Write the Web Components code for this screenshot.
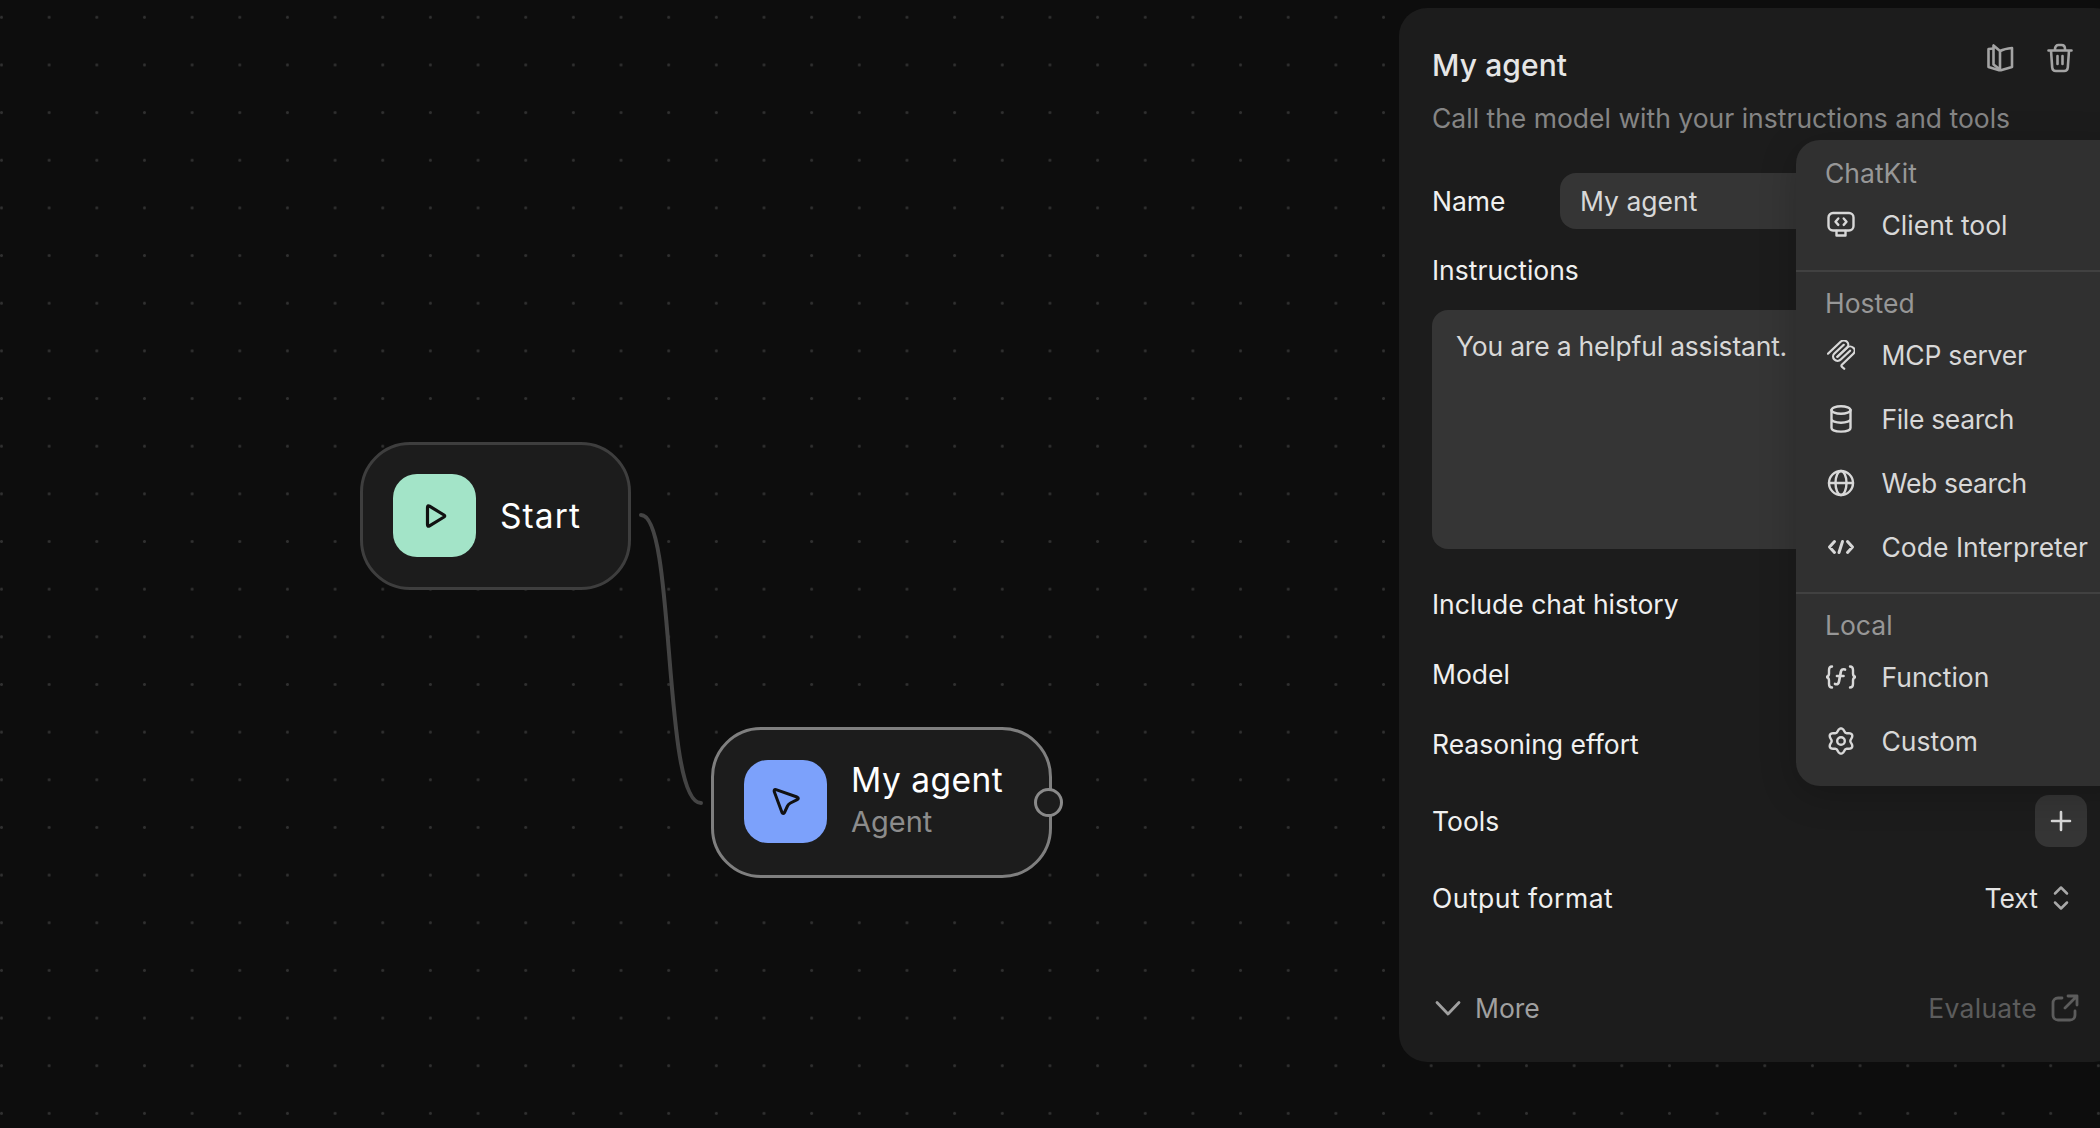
<!DOCTYPE html>
<html>
<head>
<meta charset="utf-8">
<title>My agent</title>
<style>
  html, body { margin: 0; height: 100%; background: #0d0d0d; overflow: hidden; }
  body { font-family: Inter, "Liberation Sans", sans-serif; color: #e8e8e8; }
</style>
</head>
<body>
<flow-canvas>
  <flow-node style="left:360px;top:442px;width:271px;height:148px" icon="play" color="#a3e4c8" title="Start" track="1.100"></flow-node>
  <flow-node style="left:711px;top:727px;width:341px;height:151px" icon="cursor" color="#7ca1fb" title="My agent" sub="Agent" track="0.5" selected></flow-node>
</flow-canvas>

<agent-panel>
  <panel-row label="Name" style="margin-top:35px;height:56px">
    <div style="margin-left:auto;width:527px;height:56px;box-sizing:border-box;padding:0 20px;background:#353535;border-radius:16px;display:flex;align-items:center;font-size:26.5px;color:#d8d8d8">My agent</div>
  </panel-row>
  <panel-row label="Instructions" style="margin-top:21px;height:40px"></panel-row>
  <div style="margin-top:20px;height:239px;box-sizing:border-box;padding:18px 24px;background:#353535;border-radius:16px;font-size:26.5px;line-height:36px;letter-spacing:-0.2px;color:#d8d8d8">You are a helpful assistant.</div>
  <panel-row label="Include chat history" style="margin-top:20px;height:70px"></panel-row>
  <panel-row label="Model" style="height:70px"></panel-row>
  <panel-row label="Reasoning effort" style="height:70px"></panel-row>
  <panel-row label="Tools" style="margin-top:16px;height:52px">
    <div style="margin-left:auto;width:52px;height:52px;background:#353535;border-radius:14px;display:flex;align-items:center;justify-content:center">
      <svg width="24" height="24" viewBox="0 0 24 24" fill="none" stroke="#d8d8d8" stroke-width="2.6" stroke-linecap="round"><path d="M12 3v18M3 12h18"/></svg>
    </div>
  </panel-row>
  <panel-row label="Output format" track="0.5" style="margin-top:25px;height:52px">
    <div style="margin-left:auto;margin-right:18px;display:flex;align-items:center;gap:15px;font-size:26.5px;color:#e4e4e4">Text
      <svg width="16" height="28" viewBox="0 0 16 28" fill="none" stroke="#a8a8a8" stroke-width="2.5" stroke-linecap="round" stroke-linejoin="round"><path d="M2 9.5 8 3.5l6 6M2 18.500l6 6 6-6"/></svg>
    </div>
  </panel-row>
  <panel-footer style="margin-top:60px"></panel-footer>
</agent-panel>

<tool-menu>
  <menu-label>ChatKit</menu-label>
  <menu-item icon="client">Client tool</menu-item>
  <menu-sep></menu-sep>
  <menu-label>Hosted</menu-label>
  <menu-item icon="mcp" style="letter-spacing:-0.2px">MCP server</menu-item>
  <menu-item icon="file" style="letter-spacing:-0.35px">File search</menu-item>
  <menu-item icon="web" style="letter-spacing:-0.35px">Web search</menu-item>
  <menu-item icon="code">Code Interpreter</menu-item>
  <menu-sep></menu-sep>
  <menu-label>Local</menu-label>
  <menu-item icon="fn">Function</menu-item>
  <menu-item icon="gear">Custom</menu-item>
</tool-menu>

<script>
// six soft lobes, sampled round the circle
function gearPath() {
  let d = '';
  for (let i = 0; i < 72; i++) {
    const a = i / 72 * Math.PI * 2;
    const r = 11 + 1.7 * Math.cos(6 * a);
    const x = 14 + r * Math.sin(a);
    const y = 14 - r * Math.cos(a);
    d += (i ? 'L' : 'M') + x.toFixed(2) + ' ' + y.toFixed(2);
  }
  return d + 'z';
}

const ICONS = {
  play: '<svg width="28" height="32" viewBox="0 0 28 32" fill="none" stroke="#111" stroke-width="3.2" stroke-linejoin="round"><path d="M6.500 7.500Q6.500 5 8.500 6.200L23 15Q24.500 16 23 17L8.500 25.800Q6.500 27 6.500 24.500z"/></svg>',
  cursor: '<svg width="32" height="32" viewBox="0 0 32 32" fill="none" stroke="#111" stroke-width="3" stroke-linejoin="round"><path d="M6 3.700 27 11Q29.500 12.200 27.200 13.600L20.500 17Q18.500 18 17.500 20L14.500 26.500Q13 28.500 12 26.500L4.200 5.500Q3.800 3 6 3.700z"/></svg>',
  client: '<svg viewBox="0 0 28 28"><rect x="1.500" y="2" width="25" height="17.500" rx="4.500"/><path d="M9.500 20v4.500h9V20M11.300 7.500 8.500 10.700l2.800 3.200M16.700 7.500l2.800 3.200-2.800 3.200"/></svg>',
  mcp: '<svg viewBox="20 20 150 170" preserveAspectRatio="none"><g stroke-width="12"><path d="M25 97.850 92.880 29.970c9.370-9.370 24.570-9.370 33.940 0s9.370 24.570 0 33.940L75.560 115.180"/><path d="M76.270 114.470 126.820 63.910c9.370-9.370 24.570-9.370 33.940 0l.35.350c9.370 9.370 9.370 24.570 0 33.940L99.720 159.600c-3.120 3.120-3.120 8.190 0 11.310L112.330 183.520"/><path d="M109.850 46.940 59.650 97.150c-9.370 9.370-9.370 24.570 0 33.940s24.570 9.370 33.940 0l50.200-50.210"/></g></svg>',
  file: '<svg viewBox="0 0 28 28"><ellipse cx="14" cy="5" rx="9.500" ry="3.800"/><path d="M4.500 5v18c0 2.200 4.200 3.600 9.500 3.600s9.500-1.400 9.500-3.600V5M4.500 14c0 2.200 4.200 3.800 9.500 3.800s9.500-1.600 9.500-3.800"/></svg>',
  web: '<svg viewBox="0 0 28 28"><circle cx="14" cy="14" r="12"/><ellipse cx="14" cy="14" rx="5.500" ry="12"/><path d="M2 14h24"/></svg>',
  code: '<svg viewBox="0 0 28 28"><g stroke-width="3"><path d="M7.500 8.500 2.500 14l5 5.500M20.500 8.500l5 5.500-5 5.500M15.500 8.500 12 19.500"/></g></svg>',
  fn: '<svg viewBox="1 0 30 28" style="width:30px"><path d="M7 3.500C4.500 3.500 4 5 4 7v3.500c0 2-.8 3-2.500 3.500C3.200 14.500 4 15.500 4 17.500V21c0 2 .5 3.500 3 3.500M25 3.500c2.500 0 3 1.500 3 3.500v3.500c0 2 .8 3 2.500 3.500-1.700.5-2.500 1.500-2.500 3.500V21c0 2-.5 3.500-3 3.500"/><path stroke-width="2.700" d="M20 6.500c-2.500-.8-3.800.3-4.200 2.500l-1.800 9.500c-.4 2.200-1.600 3.300-4 2.500M12 13h6.500"/></svg>',
  gear: '<svg viewBox="0 0 28 28"><path d="' + gearPath() + '"/><circle cx="14" cy="14" r="3.800"/></svg>',
  book: '<svg width="28" height="30" viewBox="0 0 28 30" fill="none" stroke="#a4a4a4" stroke-width="2.6" stroke-linejoin="round"><path d="M13 8 6.500 2.500v19l6.500 5z"/><path d="M13 8c3-1.500 7-2.500 12-3v19l-12 3.500"/><path d="M6.500 5.500l-5 .5v18l11.500 3.500"/></svg>',
  trash: '<svg width="26" height="30" viewBox="0 0 26 30" fill="none" stroke="#a4a4a4" stroke-width="2.600" stroke-linecap="round" stroke-linejoin="round"><path d="M1.500 7.500h23M8 7.500V6c0-2.500 1.500-4 3.500-4h3C16.500 2 18 3.500 18 6v1.500M4 7.500l1.200 17c.2 2.300 1.500 3.500 3.600 3.500h8.400c2.100 0 3.400-1.200 3.600-3.500L22 7.500M10.500 13v8M15.500 13v8"/></svg>',
  down: '<svg width="28" height="16" viewBox="0 0 28 16" fill="none" stroke="#a0a0a0" stroke-width="2.800" stroke-linecap="round" stroke-linejoin="round"><path d="M3 2.500 14 14 25 2.500"/></svg>',
  open: '<svg width="28" height="28" viewBox="0 0 28 28" fill="none" stroke="#5c5c5c" stroke-width="2.800" stroke-linecap="round" stroke-linejoin="round"><path d="M11 4H7C4 4 2 6 2 9v12c0 3 2 5 5 5h12c3 0 5-2 5-5v-4M17 2h9v9M26 2 14 14"/></svg>'
};

class FlowCanvas extends HTMLElement {
  connectedCallback() {
    this.attachShadow({ mode: 'open' });
    this.shadowRoot.innerHTML = `
      <style>
        :host {
          position: absolute; inset: 0; display: block; overflow: hidden;
          background-color: #0d0d0d;
          background-image: radial-gradient(circle at 1.500px 1.500px, #303030 1.200px, transparent 1.700px);
          background-size: 47.66px 47.66px;
          background-position: 0px 15.800px;
        }
        svg { position: absolute; left: 0; top: 0; }
      </style>
      <svg width="1400" height="1128" fill="none">
        <path d="M641 515C676 515 662 803 701 803" stroke="#444" stroke-width="4" stroke-linecap="round"/>
      </svg>
      <slot></slot>`;
  }
}

class FlowNode extends HTMLElement {
  connectedCallback() {
    this.attachShadow({ mode: 'open' });
    const sel = this.hasAttribute('selected');
    const sub = this.getAttribute('sub');
    this.shadowRoot.innerHTML = `
      <style>
        :host {
          position: absolute; display: flex; align-items: center; box-sizing: border-box;
          padding: 0 0 ${sub ? 2 : 1}px 30px; gap: 24px;
          background: #1c1c1c; border-radius: 50px;
          border: 3px solid ${sel ? '#7f7f7f' : '#3e3e3e'};
        }
        .icon {
          width: 83px; height: 83px; border-radius: 24px; flex: none;
          display: flex; align-items: center; justify-content: center;
          background: ${this.getAttribute('color')};
        }
        .text { margin-top: ${sub ? -3 : 0}px; }
        .title { font-size: 33.500px; line-height: 42px; font-weight: 400; color: #fff; letter-spacing: ${this.getAttribute('track') || 0}px; }
        .sub { font-size: 29px; line-height: 38px; color: #8c8c8c; margin-top: 2px; }
        .handle {
          position: absolute; right: -14px; top: 58px; width: 23px; height: 23px;
          border: 3px solid #8a8a8a; border-radius: 50%; background: #1c1c1c;
        }
      </style>
      <div class="icon">${ICONS[this.getAttribute('icon')]}</div>
      <div class="text">
        <div class="title">${this.getAttribute('title')}</div>
        ${sub ? `<div class="sub">${sub}</div>` : ''}
      </div>
      ${sub ? '<div class="handle"></div>' : ''}`;
  }
}

class AgentPanel extends HTMLElement {
  connectedCallback() {
    this.attachShadow({ mode: 'open' });
    this.shadowRoot.innerHTML = `
      <style>
        :host {
          position: absolute; left: 1399px; top: 8px; width: 723px; height: 1054px;
          box-sizing: border-box; padding: 37px 35px 0 33px; display: flex; flex-direction: column;
          background: #1c1c1c; border-radius: 28px;
        }
        header { display: flex; height: 40px; align-items: center; position: relative; }
        h1 { margin: 0; font-size: 30px; font-weight: 500; line-height: 40px; color: #e6e6e6; letter-spacing: 0.1px; }
        .tools { position: absolute; left: 555px; top: -2px; display: flex; gap: 32px; align-items: center; }
        p { margin: 13px 0 0; font-size: 26.500px; line-height: 40px; color: #858585; }
      </style>
      <header>
        <h1>My agent</h1>
        <div class="tools">${ICONS.book}${ICONS.trash}</div>
      </header>
      <p>Call the model with your instructions and tools</p>
      <slot></slot>`;
  }
}

class PanelRow extends HTMLElement {
  connectedCallback() {
    this.attachShadow({ mode: 'open' });
    this.shadowRoot.innerHTML = `
      <style>
        :host { display: flex; align-items: center; font-size: 26.500px; color: #f0f0f0; }
        span { letter-spacing: ${this.getAttribute('track') || 0}px; }
      </style>
      <span>${this.getAttribute('label')}</span>
      <slot></slot>`;
  }
}

class PanelFooter extends HTMLElement {
  connectedCallback() {
    this.attachShadow({ mode: 'open' });
    this.shadowRoot.innerHTML = `
      <style>
        :host { display: flex; align-items: center; height: 48px; font-size: 26.500px; }
        .more { display: flex; align-items: center; gap: 13px; color: #a0a0a0; margin-left: 2px; }
        .eval { margin-left: auto; margin-right: 8px; display: flex; align-items: center; gap: 14px; color: #5c5c5c; letter-spacing: 0.3px; }
      </style>
      <div class="more">${ICONS.down}<span>More</span></div>
      <div class="eval"><span>Evaluate</span>${ICONS.open}</div>`;
  }
}

class ToolMenu extends HTMLElement {
  connectedCallback() {
    this.attachShadow({ mode: 'open' });
    this.shadowRoot.innerHTML = `
      <style>
        :host {
          position: absolute; left: 1796px; top: 140px; width: 340px; height: 646px;
          box-sizing: border-box; padding-top: 13px;
          background: #303030; border-radius: 24px; display: block;
          box-shadow: 0 8px 36px rgba(0, 0, 0, 0.22);
        }
      </style>
      <slot></slot>`;
  }
}

class MenuLabel extends HTMLElement {
  connectedCallback() {
    this.attachShadow({ mode: 'open' });
    this.shadowRoot.innerHTML = `
      <style>
        :host { display: block; padding-left: 29px; height: 40px; line-height: 40px; font-size: 26.500px; color: #979797; }
      </style>
      <slot></slot>`;
  }
}

class MenuItem extends HTMLElement {
  connectedCallback() {
    this.attachShadow({ mode: 'open' });
    this.shadowRoot.innerHTML = `
      <style>
        :host {
          display: flex; align-items: center; height: 64px; padding-left: 31px;
          font-size: 26.500px; color: #d8d8d8; white-space: nowrap;
        }
        .icon { width: 28px; height: 32px; margin-right: 26.500px; display: flex; align-items: center; justify-content: center; flex: none; }
        svg { width: 28px; height: 30px; fill: none; stroke: #d8d8d8; stroke-width: 2.400; stroke-linecap: round; stroke-linejoin: round; flex: none; }
      </style>
      <div class="icon">${ICONS[this.getAttribute('icon')]}</div>
      <slot></slot>`;
  }
}

class MenuSep extends HTMLElement {
  connectedCallback() {
    this.attachShadow({ mode: 'open' });
    this.shadowRoot.innerHTML = `
      <style>
        :host { display: block; height: 2px; background: #414141; margin: 13px 0 11px; }
      </style>`;
  }
}

customElements.define('flow-canvas', FlowCanvas);
customElements.define('flow-node', FlowNode);
customElements.define('agent-panel', AgentPanel);
customElements.define('panel-row', PanelRow);
customElements.define('panel-footer', PanelFooter);
customElements.define('tool-menu', ToolMenu);
customElements.define('menu-label', MenuLabel);
customElements.define('menu-item', MenuItem);
customElements.define('menu-sep', MenuSep);
</script>
</body>
</html>
